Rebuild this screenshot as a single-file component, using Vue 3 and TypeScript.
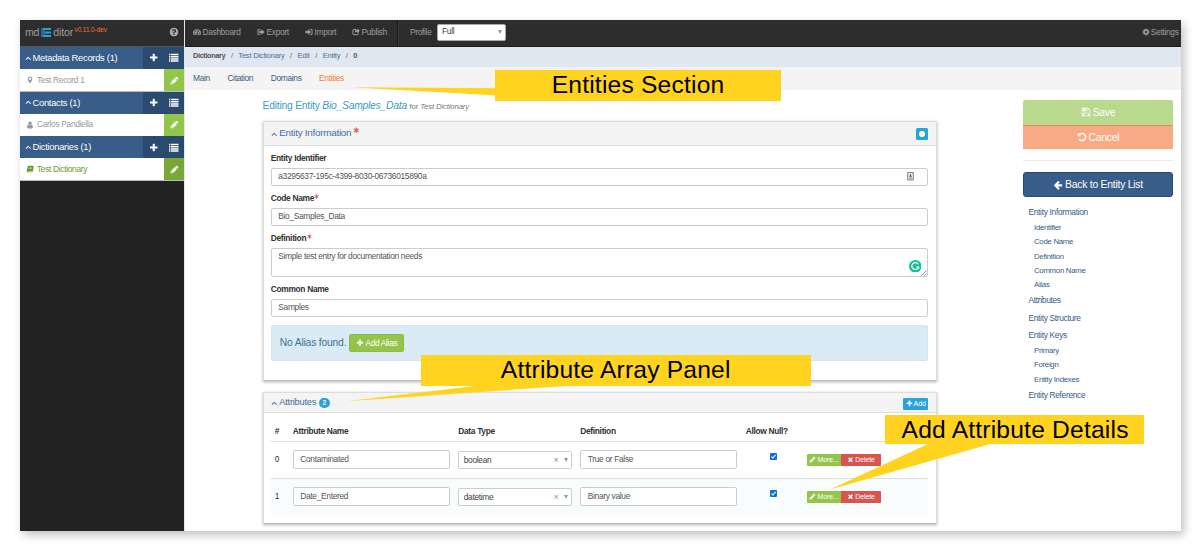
<script setup lang="ts">
import { defineComponent, h, ref } from 'vue'

type Glyph = { d: string; rule?: 'evenodd' }

const glyphs: Record<string, Glyph> = {
  plus: { d: 'M1600 736v192q0 40-28 68t-68 28h-416v416q0 40-28 68t-68 28h-192q-40 0-68-28t-28-68v-416h-416q-40 0-68-28t-28-68v-192q0-40 28-68t68-28h416v-416q0-40 28-68t68-28h192q40 0 68 28t28 68v416h416q40 0 68 28t28 68z' },
  pencil: { d: 'M491 1536l91-91-235-235-91 91v107h128v128h107zm523-928q0-22-22-22-10 0-17 7l-542 542q-7 7-7 17 0 22 22 22 10 0 17-7l542-542q7-7 7-17zm-54-192l416 416-832 832h-416v-416zm683 96q0 53-37 90l-166 166-416-416 166-165q36-38 90-38 53 0 91 38l235 234q37 39 37 91z' },
  times: { d: 'M1490 1322q0 40-28 68l-136 136q-28 28-68 28t-68-28l-294-294-294 294q-28 28-68 28t-68-28l-136-136q-28-28-28-68t28-68l294-294-294-294q-28-28-28-68t28-68l136-136q28-28 68-28t68 28l294 294 294-294q28-28 68-28t68 28l136 136q28 28 28 68t-28 68l-294 294 294 294q28 28 28 68z' },
  back: { d: 'M1664 896v128q0 53-32.5 90.5t-84.5 37.5h-704l293 294q38 36 38 90t-38 90l-75 76q-37 37-90 37-52 0-91-37l-651-652q-37-37-37-90 0-52 37-91l651-650q38-38 91-38 52 0 90 38l75 74q38 38 38 91t-38 91l-293 293h704q52 0 84.5 37.5t32.5 90.5z' },
  undo: { d: 'M1664 896q0 156-61 298t-164 245-245 164-298 61q-172 0-327-72.5t-264-204.5q-7-10-6.5-22.5t8.5-20.5l137-138q10-9 25-9 16 2 23 12 73 95 179 147t225 52q104 0 198.5-40.5t163.5-109.5 109.5-163.5 40.5-198.5-40.5-198.5-109.5-163.5-163.5-109.5-198.5-40.5q-98 0-188 35.5t-160 101.5l137 138q31 30 14 69-17 40-59 40h-448q-26 0-45-19t-19-45v-448q0-42 40-59 39-17 69 14l130 129q107-101 244.5-156.5t284.5-55.5q156 0 298 61t245 164 164 245 61 298z' },
  save: { d: 'M512 1536h768v-384h-768v384zm896 0h128v-896q0-14-10-38.5t-20-34.5l-281-281q-10-10-34-20t-39-10v416q0 40-28 68t-68 28h-576q-40 0-68-28t-28-68v-416h-128v1280h128v-416q0-40 28-68t68-28h832q40 0 68 28t28 68v416zm-384-928v-320q0-13-9.5-22.5t-22.5-9.5h-192q-13 0-22.5 9.5t-9.5 22.5v320q0 13 9.5 22.5t22.5 9.5h192q13 0 22.5-9.5t9.5-22.5zm640 32v928q0 40-28 68t-68 28h-1344q-40 0-68-28t-28-68v-1344q0-40 28-68t68-28h928q40 0 88 20t76 48l280 280q28 28 48 76t20 88z' },
  cog: { d: 'M1152 896q0-106-75-181t-181-75-181 75-75 181 75 181 181 75 181-75 75-181zm512-109v222q0 12-8 23t-20 13l-185 28q-19 54-39 91 35 50 107 138 10 12 10 25t-9 23q-27 37-99 108t-94 71q-12 0-26-9l-138-108q-44 23-91 38-16 136-29 186-7 28-36 28h-222q-14 0-24.5-8.5t-11.5-21.5l-28-184q-49-16-90-37l-141 107q-10 9-25 9-14 0-25-11-126-114-165-168-7-10-7-23 0-12 8-23 15-21 51-66.5t54-70.5q-27-50-41-99l-183-27q-13-2-21-12.5t-8-23.5v-222q0-12 8-23t19-13l186-28q14-46 39-92-40-57-107-138-10-12-10-24 0-10 9-23 26-36 98.5-107.5t94.5-71.5q13 0 26 10l138 107q44-23 91-38 16-136 29-186 7-28 36-28h222q14 0 24.5 8.5t11.5 21.5l28 184q49 16 90 37l142-107q9-9 24-9 13 0 25 10 129 119 165 170 7 8 7 22 0 12-8 23-15 21-51 66.5t-54 70.5q26 50 41 98l183 28q13 2 21 12.5t8 23.5z' },
  help: { d: 'M1024 1376v-192q0-14-9-23t-23-9h-192q-14 0-23 9t-9 23v192q0 14 9 23t23 9h192q14 0 23-9t9-23zm256-672q0-88-55.5-163t-138.5-116-170-41q-243 0-371 213-15 24 8 42l132 100q7 6 19 6 16 0 25-12 53-68 86-92 34-24 86-24 48 0 85.5 26t37.5 59q0 38-20 61t-68 45q-63 28-115.5 86.5t-52.5 125.5v36q0 14 9 23t23 9h192q14 0 23-9t9-23q0-19 21.5-49.5t54.5-49.5q32-18 49-28.5t46-35 44.5-48 28-60.5 12.5-81zm384 192q0 209-103 385.5t-279.5 279.5-385.5 103-385.5-103-279.5-279.5-103-385.5 103-385.5 279.5-279.5 385.5-103 385.5 103 279.5 279.5 103 385.5z' },
  marker: { d: 'M1152 640q0-106-75-181t-181-75-181 75-75 181 75 181 181 75 181-75 75-181zm256 0q0 109-33 179l-364 774q-16 33-47.5 52t-67.5 19-67.5-19-46.5-52l-365-774q-33-70-33-179 0-212 150-362t362-150 362 150 150 362z' },
  user: { d: 'M1536 1399q0 109-62.5 187t-150.5 78h-854q-88 0-150.5-78t-62.5-187q0-85 8.5-160.5t31.5-152 58.5-131 94-89 134.5-34.5q131 128 313 128t313-128q76 0 134.5 34.5t94 89 58.5 131 31.5 152 8.5 160.5zm-256-887q0 159-112.5 271.5t-271.5 112.5-271.5-112.5-112.5-271.5 112.5-271.5 271.5-112.5 271.5 112.5 112.5 271.5z' },
  book: { d: 'M560 170H1600Q1730 180 1700 330L1440 1250Q1410 1340 1300 1340H400Q330 1350 330 1420Q340 1480 420 1480H1370L1660 520L1750 560L1480 1540Q1450 1620 1350 1620H330Q120 1600 130 1380L410 300Q440 190 560 170zM680 480L650 580H1330L1360 480zM600 740L570 840H1260L1290 740z', rule: 'evenodd' },
  dash: { d: 'M896 256A896 896 0 0 0 0 1152Q0 1380 130 1536H1662Q1792 1380 1792 1152A896 896 0 0 0 896 256zM320 1024a128 128 0 1 1-1 0zM512 576a128 128 0 1 1-1 0zM896 384a128 128 0 1 1-1 0zM1280 576a128 128 0 1 1-1 0zM1472 1024a128 128 0 1 1-1 0zM1020 700L1120 730L1030 1120A170 170 0 1 1 910 1080z', rule: 'evenodd' },
  signout: { d: 'M640 236V446H420Q308 450 308 550V1240Q308 1340 420 1346H640V1556H400Q98 1540 98 1260V530Q98 250 400 236zM1000 260L1720 896L1000 1532V1160H520V630H1000z' },
  signin: { d: 'M1152 236H1390Q1680 250 1694 530V1260Q1680 1540 1390 1556H1152V1346H1370Q1480 1340 1484 1240V550Q1480 450 1370 446H1152zM660 260L1380 896L660 1532V1160H100V630H660z' },
  share: { d: 'M900 236V446H470Q320 460 308 580V1280Q320 1410 470 1420H1130Q1280 1410 1290 1280V1050L1490 900V1300Q1470 1620 1150 1640H450Q120 1620 98 1300V560Q120 250 450 236zM1180 90L1780 600L1180 1110V820Q800 800 720 1140Q440 460 1180 380z' },
  asterisk: { d: 'M740 120H1050L1010 650L1460 370L1620 640L1130 896L1620 1150L1460 1420L1010 1140L1050 1670H740L780 1140L330 1420L170 1150L660 896L170 640L330 370L780 650z' },
  caret: { d: 'M896 480L1640 1180L1450 1370L896 840L342 1370L152 1180z' },
  list: { d: 'M0 150h230v280H0zM350 150h1442v280H350zM0 560h230v280H0zM350 560h1442v280H350zM0 970h230v280H0zM350 970h1442v280H350zM0 1380h230v260H0zM350 1380h1442v260H350z' },
}

const Glyph = defineComponent({
  props: { name: { type: String, required: true } },
  setup(props) {
    return () =>
      h('svg', { viewBox: '0 0 1792 1792', class: 'glyph', 'aria-hidden': 'true' }, [
        h('path', { d: glyphs[props.name].d, fill: 'currentColor', 'fill-rule': glyphs[props.name].rule ?? 'nonzero' }),
      ])
  },
})

const sections = [
  { title: 'Metadata Records (1)', item: 'Test Record 1', icon: 'marker', active: false },
  { title: 'Contacts (1)', item: 'Carlos Pandiella', icon: 'user', active: false },
  { title: 'Dictionaries (1)', item: 'Test Dictionary', icon: 'book', active: true },
]

const menu = [
  { label: 'Dashboard', icon: 'dash' },
  { label: 'Export', icon: 'signout' },
  { label: 'Import', icon: 'signin' },
  { label: 'Publish', icon: 'share' },
]

const crumbs = ['Dictionary', 'Test Dictionary', 'Edit', 'Entity', '0']
const tabs = ['Main', 'Citation', 'Domains', 'Entities']

const attributes = ref([
  { name: 'Contaminated', type: 'boolean', definition: 'True or False', nullable: true },
  { name: 'Date_Entered', type: 'datetime', definition: 'Binary value', nullable: true },
])

const links = [
  { label: 'Entity Information', children: ['Identifier', 'Code Name', 'Definition', 'Common Name', 'Alias'] },
  { label: 'Attributes', children: [] },
  { label: 'Entity Structure', children: [] },
  { label: 'Entity Keys', children: ['Primary', 'Foreign', 'Entity Indexes'] },
  { label: 'Entity Reference', children: [] },
]
</script>

<template>
  <div class="page">
    <div class="window">
      <aside class="sidebar">
        <header class="brand">
          <span>md</span>
          <svg class="logo" viewBox="0 0 10 9"><path d="M0 0h4v9H0z" fill="#1d6d9b" /><path d="M2 0h8v2H2zM4 3.5h6v2H4zM2 7h8v2H2z" fill="#2a9fd6" /></svg>
          <span>ditor</span>
          <sup>v0.11.0-dev</sup>
          <Glyph name="help" class="help" />
        </header>
        <section v-for="s in sections" :key="s.title" class="group">
          <div class="group-head">
            <Glyph name="caret" class="chev" />
            <span class="group-title">{{ s.title }}</span>
            <span class="tools"><Glyph name="plus" class="tool-plus" /><Glyph name="list" class="tool-list" /></span>
          </div>
          <div class="group-item" :class="{ active: s.active }">
            <Glyph :name="s.icon" class="item-icon" />
            <span>{{ s.item }}</span>
            <span class="edit"><Glyph name="pencil" /></span>
          </div>
        </section>
      </aside>

      <div class="main">
        <nav class="topnav">
          <a v-for="m in menu" :key="m.label" class="menu" :class="m.icon"><Glyph :name="m.icon" />{{ m.label }}</a>
          <div class="profile">
            <span>Profile</span>
            <div class="profile-select"><span>Full</span><i class="tri"></i></div>
          </div>
          <a class="settings"><Glyph name="cog" />Settings</a>
        </nav>
        <div class="crumbs">
          <template v-for="(c, i) in crumbs" :key="c">
            <span v-if="i" class="slash">/</span>
            <span :class="{ strong: i === 0 || i === 4 }">{{ c }}</span>
          </template>
        </div>
        <div class="tabs">
          <a v-for="t in tabs" :key="t" :class="{ current: t === 'Entities' }">{{ t }}</a>
        </div>

        <div class="body">
          <main class="content">
            <h1 class="title">Editing Entity <em>Bio_Samples_Data</em> <small>for <em>Test Dictionary</em></small></h1>

            <section class="panel info">
              <header class="panel-head">
                <Glyph name="caret" class="chev" />
                <span class="panel-title">Entity Information</span>
                <Glyph name="asterisk" class="required big" />
                <span class="dot-btn"><i></i></span>
              </header>
              <div class="form">
                <label>Entity Identifier</label>
                <div class="input">
                  <span>a3295637-195c-4399-8030-06736015890a</span>
                  <svg class="contact" viewBox="0 0 7 9"><path d="M.5.5h6v8h-6z" fill="#eee" stroke="#777" /><path d="M3 2h1v2H3zM2 4h3v1H2zM2 6h3v1H2z" fill="#555" /></svg>
                </div>
                <label>Code Name<Glyph name="asterisk" class="required" /></label>
                <div class="input"><span>Bio_Samples_Data</span></div>
                <label>Definition<Glyph name="asterisk" class="required" /></label>
                <div class="input area">
                  <span>Simple test entry for documentation needs</span>
                  <svg class="grammar" viewBox="0 0 12 12"><circle cx="6" cy="6" r="6" fill="#15c39a" /><path d="M8.7 3.9A3.3 3.3 0 1 0 9.2 6.7H6.8M9.2 6.5V8.4" fill="none" stroke="#fff" stroke-width="1.1" /></svg>
                  <svg class="grip" viewBox="0 0 6 6"><path d="M.5 5.5l5-5M3.5 5.5l2-2" stroke="#777" stroke-width=".8" /></svg>
                </div>
                <label>Common Name</label>
                <div class="input"><span>Samples</span></div>
                <div class="well">
                  <span>No Alias found.</span>
                  <button class="add-alias"><Glyph name="plus" />Add Alias</button>
                </div>
              </div>
            </section>

            <section class="panel attrs">
              <header class="panel-head short">
                <Glyph name="caret" class="chev" />
                <span class="panel-title small">Attributes</span>
                <span class="badge">2</span>
                <button class="add"><Glyph name="plus" />Add</button>
              </header>
              <div class="table">
                <div class="row head">
                  <span>#</span><span>Attribute Name</span><span>Data Type</span><span>Definition</span><span>Allow Null?</span><span></span>
                </div>
                <div v-for="(a, i) in attributes" :key="a.name" class="row">
                  <span class="idx">{{ i }}</span>
                  <div class="input cell">{{ a.name }}</div>
                  <div class="input select"><span>{{ a.type }}</span><span class="clear">×</span><i class="tri"></i></div>
                  <div class="input cell">{{ a.definition }}</div>
                  <span class="check"><svg v-if="a.nullable" viewBox="0 0 7 7"><rect width="7" height="7" rx="1" fill="#0b6fe0" /><path d="M1.5 3.6L2.9 5L5.6 1.9" fill="none" stroke="#fff" stroke-width="1.1" /></svg></span>
                  <div class="actions">
                    <button class="more"><Glyph name="pencil" />More...</button>
                    <button class="delete"><Glyph name="times" />Delete</button>
                  </div>
                </div>
              </div>
            </section>
          </main>

          <aside class="side">
            <button class="save"><Glyph name="save" />Save</button>
            <button class="cancel"><Glyph name="undo" />Cancel</button>
            <hr />
            <button class="back"><Glyph name="back" />Back to Entity List</button>
            <ul class="links">
              <li v-for="l in links" :key="l.label">
                <a>{{ l.label }}</a>
                <a v-for="c in l.children" :key="c" class="sub">{{ c }}</a>
              </li>
            </ul>
          </aside>
        </div>
      </div>
    </div>

    <svg class="tails" viewBox="0 0 1200 550">
      <path d="M352 87.2L497 88.3V95.5zM346 401.2L483 385H582zM830 489.5L930 443H994z" fill="#ffd320" />
    </svg>
    <div class="callout one">Entities Section</div>
    <div class="callout two">Attribute Array Panel</div>
    <div class="callout three">Add Attribute Details</div>
  </div>
</template>

<style>
body {
  margin: 0;
  background: #fff;
}
</style>

<style scoped>
* {
  box-sizing: border-box;
}
.page {
  position: relative;
  width: 1200px;
  height: 550px;
  padding: 20px 0 0 20px;
  overflow: hidden;
  font: 8.4px/1 'Liberation Sans', Arial, sans-serif;
  letter-spacing: -0.32px;
  color: #333;
  white-space: nowrap;
}
.window {
  display: flex;
  width: 1161px;
  height: 510.5px;
  background: #fff;
  box-shadow: 3px 4px 9px rgba(0, 0, 0, 0.25);
}
.glyph {
  width: 8px;
  height: 8px;
  flex: none;
}
button {
  display: flex;
  align-items: center;
  justify-content: center;
  margin: 0;
  padding: 0;
  border: 0;
  font: inherit;
  letter-spacing: inherit;
  color: #fff;
}

/* sidebar */
.sidebar {
  width: 164px;
  background: #222;
}
.brand {
  display: flex;
  align-items: center;
  height: 27px;
  padding: 0 5px 2px;
  background: #2d2d2d;
  border-bottom: 1px solid #555;
  color: #9d9d9d;
  font-size: 10.5px;
  letter-spacing: -0.15px;
}
.logo {
  width: 10px;
  height: 9px;
  margin: 0 2px;
}
.brand sup {
  margin: -4px 0 0 1.5px;
  font-size: 6.4px;
  letter-spacing: -0.05px;
  line-height: 1;
  color: #f4743b;
}
.help {
  width: 10px;
  height: 10px;
  margin-left: auto;
  color: #aaa;
}
.group {
  height: 44.7px;
  border-bottom: 1px solid #b5bcc4;
}
.group-head {
  display: flex;
  align-items: center;
  height: 22px;
  padding-left: 4.5px;
  background: #375d88;
  color: #fff;
}
.group-title {
  margin: 1px 0 0 1.5px;
  font-size: 9.3px;
  letter-spacing: -0.25px;
}
.chev {
  width: 6.5px;
  height: 6.5px;
}
.tools {
  display: flex;
  align-items: center;
  align-self: stretch;
  width: 41px;
  margin-left: auto;
  padding-left: 5.5px;
  background: #2a4a70;
}
.tool-plus {
  width: 9.5px;
  height: 9.5px;
}
.tool-list {
  width: 9.5px;
  height: 9.5px;
  margin-left: 11px;
}
.group-item {
  display: flex;
  align-items: center;
  height: 22px;
  padding-left: 5.5px;
  background: #fff;
  color: #999;
}
.item-icon {
  margin-right: 3.5px;
}
.group-item.active {
  color: #6a9a33;
}
.edit {
  display: flex;
  align-items: center;
  justify-content: center;
  align-self: stretch;
  width: 20px;
  margin-left: auto;
  background: #93c54b;
  color: #fff;
}
.edit .glyph {
  width: 9px;
  height: 9px;
}
.active .edit {
  background: #79a736;
}

/* top bars */
.main {
  width: 997px;
  border-left: 1px solid #e4e4e4;
}
.topnav {
  display: flex;
  align-items: center;
  height: 27px;
  padding: 0 2.5px 2px 8px;
  background: #2d2d2d;
  border-bottom: 1px solid #1d1d1d;
  color: #9d9d9d;
}
.menu {
  display: flex;
  align-items: center;
  gap: 1.5px;
  width: 48px;
}
.menu.dash {
  width: 64px;
}
.menu.signin {
  width: 47px;
}
.menu.share {
  width: 45px;
}
.profile {
  display: flex;
  align-items: center;
  align-self: stretch;
  margin-bottom: -2px;
  padding: 0 0 2px 12px;
  border-left: 1px solid #1a1a1a;
  box-shadow: inset 1px 0 #3c3c3c;
}
.profile-select {
  display: flex;
  align-items: center;
  width: 69px;
  height: 17px;
  margin-left: 5.5px;
  padding: 0 3px 1px 4px;
  background: #fff;
  border: 1px solid #aaa;
  border-radius: 2px;
  color: #444;
}
.tri {
  margin-left: auto;
  border: 2.4px solid transparent;
  border-top: 4px solid #999;
  border-bottom: 0;
}
.settings {
  display: flex;
  align-items: center;
  gap: 1px;
  margin-left: auto;
}
.crumbs {
  display: flex;
  align-items: center;
  height: 20px;
  padding: 0 8px 2px;
  background: #dfe8f1;
  font-size: 7.5px;
  letter-spacing: -0.2px;
  color: #4d6f96;
}
.slash {
  width: 13px;
  text-align: center;
  color: #666;
}
.strong {
  font-size: 7.4px;
  letter-spacing: -0.38px;
  font-weight: bold;
  color: #555;
}
.tabs {
  display: flex;
  align-items: center;
  gap: 17.5px;
  height: 23px;
  padding: 0 8px 1px;
  background: #f4f4f4;
  color: #325d88;
}
.current {
  color: #f47c3c;
}

/* content */
.body {
  display: flex;
  justify-content: space-between;
  padding: 0 8px 0 77.6px;
}
.content {
  width: 674px;
}
.title {
  height: 31.4px;
  margin: 0;
  padding-top: 10px;
  font-size: 10.3px;
  letter-spacing: -0.22px;
  font-weight: normal;
  line-height: 11px;
  color: #3a9bc9;
}
.title small {
  font-size: 7.7px;
  letter-spacing: -0.12px;
  color: #777;
}
.panel {
  background: #fff;
  border: 1px solid #ddd;
  border-bottom-color: #bbb;
  box-shadow: 0 1px 3px rgba(0, 0, 0, 0.3);
}
.info {
  height: 260px;
  margin-bottom: 11px;
}
.attrs {
  height: 131.5px;
}
.panel-head {
  display: flex;
  align-items: center;
  height: 24px;
  padding: 0 7.2px;
  background: #f4f4f4;
  border-bottom: 1px solid #ddd;
  color: #446e9b;
}
.panel-title {
  margin: -2px 0 0 2px;
  font-size: 9.9px;
  letter-spacing: -0.27px;
}
.panel-head.short {
  height: 20px;
}
.panel-title.small {
  margin-top: -1px;
  font-size: 9.3px;
  letter-spacing: -0.25px;
}
.required {
  width: 5px;
  height: 5px;
  color: #d9534f;
}
.required.big {
  width: 6.5px;
  height: 6.5px;
  margin: -7px 0 0 2px;
}
.dot-btn {
  display: flex;
  align-items: center;
  justify-content: center;
  width: 12.5px;
  height: 12.5px;
  margin-left: auto;
  background: #29a3dc;
  border-radius: 1.5px;
}
.dot-btn i {
  width: 6.5px;
  height: 6.5px;
  border-radius: 50%;
  background: #fff;
}
.form {
  padding: 0 7.2px;
}
label {
  display: flex;
  align-items: center;
  height: 21.5px;
  padding-top: 3px;
  font-weight: bold;
}
label .required {
  margin: -4px 0 0 0.5px;
}
.input {
  display: flex;
  align-items: center;
  height: 18.5px;
  padding: 0 6.5px 2px;
  background: #fff;
  border: 1px solid #ccc;
  border-radius: 2px;
  color: #555;
}
.area {
  position: relative;
  align-items: flex-start;
  height: 29.5px;
  padding-top: 3px;
}
.contact {
  width: 7px;
  height: 8.5px;
  margin: 1px 7px 0 auto;
}
.grammar {
  position: absolute;
  right: 6px;
  bottom: 4px;
  width: 12.5px;
  height: 12.5px;
}
.grip {
  position: absolute;
  right: 0.5px;
  bottom: 0.5px;
  width: 6px;
  height: 6px;
}
.well {
  display: flex;
  align-items: center;
  height: 36px;
  margin-top: 8px;
  padding-left: 8px;
  background: #d9ebf5;
  border: 1px solid #cfe6f0;
  border-radius: 2px;
  font-size: 10.3px;
  letter-spacing: -0.18px;
  color: #3f7393;
}
.add-alias {
  gap: 1px;
  width: 55px;
  height: 18px;
  margin-left: 3px;
  background: #93c54b;
  border: 1px solid #8abf43;
  border-radius: 2px;
  font-size: 8.3px;
  letter-spacing: -0.3px;
}
.badge {
  width: 11px;
  height: 10px;
  margin-left: 2.5px;
  border-radius: 5px;
  background: #29a3dc;
  color: #fff;
  font-size: 6.5px;
  font-weight: bold;
  line-height: 10px;
  text-align: center;
}
.add {
  gap: 1px;
  width: 25.5px;
  height: 12px;
  margin: 2px 0 0 auto;
  background: #29a3dc;
  border-radius: 1px;
  font-size: 7px;
  letter-spacing: -0.1px;
}
.add .glyph {
  width: 7px;
  height: 7px;
}
.table {
  padding: 0 7.2px;
}
.row {
  display: grid;
  grid-template-columns: 22px 165.5px 122px 165.5px 61px 1fr;
  align-items: center;
  height: 37px;
  padding-bottom: 2px;
  border-top: 1px solid #ddd;
}
.row:last-child {
  background: #f8fcfd;
}
.row.head {
  height: 28px;
  padding: 7px 0 0;
  border: 0;
  font-weight: bold;
}
.row > :first-child {
  padding-left: 4px;
}
.cell {
  width: 157px;
  padding-bottom: 0.5px;
}
.select {
  width: 114px;
  margin-top: 1px;
  padding: 0 3px 0 4.5px;
  color: #444;
}
.clear {
  margin-left: auto;
  color: #888;
}
.select .tri {
  margin-left: 6px;
}
.check {
  height: 12px;
  padding-left: 24px;
}
.check svg {
  display: block;
  width: 7px;
  height: 7px;
}
.actions {
  display: flex;
  padding-top: 1px;
}
.actions button {
  gap: 1px;
  height: 11.5px;
  font-size: 7px;
  letter-spacing: -0.1px;
}
.actions .glyph {
  width: 7px;
  height: 7px;
}
.actions .more {
  width: 34.5px;
  background: #93c54b;
  border-radius: 1px 0 0 1px;
}
.actions .delete {
  width: 39.5px;
  background: #d9534f;
  border-radius: 0 1px 1px 0;
}

/* right column */
.side {
  width: 150px;
  padding-top: 10px;
}
.side button {
  gap: 2px;
  width: 150px;
  height: 24.5px;
  padding-top: 1px;
  font-size: 10.4px;
  letter-spacing: -0.25px;
}
.side button .glyph {
  width: 10px;
  height: 10px;
  margin-top: -1px;
}
.side .save {
  background: #b8d98e;
  border-radius: 2px 2px 0 0;
}
.side .cancel {
  background: #f8aa86;
  border-top: 1px solid #e08f50;
}
.side hr {
  height: 1px;
  margin: 11px 0;
  border: 0;
  background: #eaeaea;
}
.side .back {
  height: 25px;
  background: #375d88;
  border: 1px solid #24497a;
  border-radius: 3px;
}
.links {
  margin: 7px 0 0;
  padding: 0;
  list-style: none;
  color: #325d88;
}
.links a {
  display: block;
  height: 17.2px;
  padding-left: 5.5px;
  line-height: 17.2px;
}
.links .sub {
  height: 14.25px;
  padding-left: 11px;
  font-size: 7.8px;
  letter-spacing: -0.28px;
  line-height: 14.25px;
}

/* annotations */
.tails {
  position: absolute;
  inset: 0;
  width: 1200px;
  height: 550px;
}
.callout {
  position: absolute;
  height: 30.5px;
  background: #ffd320;
  color: #000;
  font-size: 24.6px;
  line-height: 29.5px;
  letter-spacing: 0.2px;
  text-align: center;
}
.one {
  left: 495.3px;
  top: 70px;
  width: 285.5px;
}
.two {
  left: 420.5px;
  top: 355.3px;
  width: 390.5px;
}
.three {
  left: 885.3px;
  top: 415.2px;
  width: 258.7px;
  height: 28.8px;
  padding-left: 1px;
}
</style>
